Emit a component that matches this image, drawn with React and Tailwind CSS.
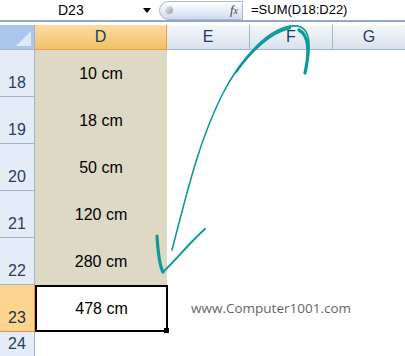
import React from "react";

const rows = [
  { n: 18, v: "10 cm" },
  { n: 19, v: "18 cm" },
  { n: 20, v: "50 cm" },
  { n: 21, v: "120 cm" },
  { n: 22, v: "280 cm" },
];

function RowHead({ n, active }) {
  return (
    <div
      className={`flex h-[47px] w-[35px] items-end justify-center border-b border-r pb-[1px] text-[16px] ${
        active
          ? "border-[#f29436] bg-[#fdd58f] text-[#1f3350]"
          : "border-[#9eb6ce] bg-[#e4ecf7] text-[#27405f]"
      }`}
    >
      {n}
    </div>
  );
}

export default function App() {
  return (
    <div
      className="relative h-[356px] w-[405px] overflow-hidden bg-white"
      style={{ fontFamily: "'Liberation Sans', Arial, sans-serif" }}
    >
      {/* formula bar */}
      <div className="flex h-[20px] items-center bg-white text-[14px] text-black">
        <div className="w-[140px] pl-[58px]">D23</div>
        <div className="ml-[3px] h-0 w-0 border-x-[4px] border-t-[5px] border-x-transparent border-t-black" />
        <div className="ml-[8px] flex h-[19px] w-[84px] items-center justify-between rounded-l-full border border-[#a7b9d2] bg-gradient-to-b from-[#ffffff] via-[#e7eef8] to-[#cfdbeb] pl-[5px] pr-[4px]">
          <div className="h-[8px] w-[8px] rounded-full bg-gradient-to-br from-[#f4f4f4] to-[#9a9a9a]" />
          <span
            className="text-[13px] italic text-[#444]"
            style={{ fontFamily: "'Liberation Serif', serif" }}
          >
            f<span className="text-[10px]">x</span>
          </span>
        </div>
        <div className="pl-[8px] text-[13px]">=SUM(D18:D22)</div>
      </div>
      <div className="h-[2px] bg-[#92a8c6]" />
      <div className="h-[3px] bg-white" />

      {/* column header */}
      <div className="flex h-[25px] text-[16px] text-[#1f3a5a]">
        <div className="relative w-[35px] border-b border-r border-[#9eb6ce] bg-[#abc6ea]">
          <div className="absolute bottom-[3px] right-[3px] h-0 w-0 border-b-[15px] border-l-[15px] border-b-[#dfe8f5] border-l-transparent" />
        </div>
        <div className="flex w-[132px] items-center justify-center border-b border-r border-[#f29b3b] bg-gradient-to-b from-[#fadca3] to-[#f2c163]">
          D
        </div>
        <div className="flex w-[83px] items-center justify-center border-b border-r border-[#9eb6ce] bg-gradient-to-b from-[#f4f7fb] to-[#d9e2ee]">
          E
        </div>
        <div className="flex w-[83px] items-center justify-center border-b border-r border-[#9eb6ce] bg-gradient-to-b from-[#f4f7fb] to-[#d9e2ee]">
          F
        </div>
        <div className="flex flex-1 items-center justify-center border-b border-[#9eb6ce] bg-gradient-to-b from-[#f4f7fb] to-[#d9e2ee]">
          G
        </div>
      </div>

      {/* data rows */}
      {rows.map((r) => (
        <div key={r.n} className="flex">
          <RowHead n={r.n} />
          <div className="flex h-[47px] w-[132px] items-center justify-center bg-[#ddd9c4] text-[16px] text-black">
            {r.v}
          </div>
        </div>
      ))}
      <div className="flex">
        <RowHead n={23} active />
        <div className="relative flex h-[47px] w-[133px] items-center justify-center border-2 border-black bg-white text-[16px] text-black">
          478 cm
          <div className="absolute -bottom-[3px] -right-[3px] h-[5px] w-[5px] bg-black" />
        </div>
        <div
          className="flex flex-1 items-center pl-[23px] text-[13.5px] text-[#666]"
          style={{ fontFamily: "'Open Sans', sans-serif" }}
        >
          www.Computer1001.com
        </div>
      </div>
      <div className="flex">
        <div className="flex h-[30px] w-[35px] items-start justify-center border-r border-[#9eb6ce] bg-[#e4ecf7] text-[16px] text-[#27405f]">
          24
        </div>
      </div>

      {/* arrow drawing */}
      <svg className="absolute left-0 top-0" width="405" height="356" viewBox="0 0 405 356">
        <path
          d="M305 73 C311 50 312 28 297 26 C270 24 240 60 222 95 C200 140 190 180 172 250"
          fill="none"
          stroke="#0c9a98"
          strokeWidth="1.6"
          strokeLinecap="round"
        />
        <path
          d="M305 73 C309 55 310 36 299 30"
          fill="none"
          stroke="#0c9a98"
          strokeWidth="3.2"
          strokeLinecap="round"
        />
        <path
          d="M290 28 C270 32 250 52 236 72"
          fill="none"
          stroke="#0c9a98"
          strokeWidth="2.4"
          strokeLinecap="round"
        />
        <path
          d="M157 236 C158 252 159 265 163 272"
          fill="none"
          stroke="#0c9a98"
          strokeWidth="3.2"
          strokeLinecap="round"
        />
        <path
          d="M163 272 C176 260 190 242 205 229"
          fill="none"
          stroke="#0c9a98"
          strokeWidth="2"
          strokeLinecap="round"
        />
      </svg>
    </div>
  );
}
